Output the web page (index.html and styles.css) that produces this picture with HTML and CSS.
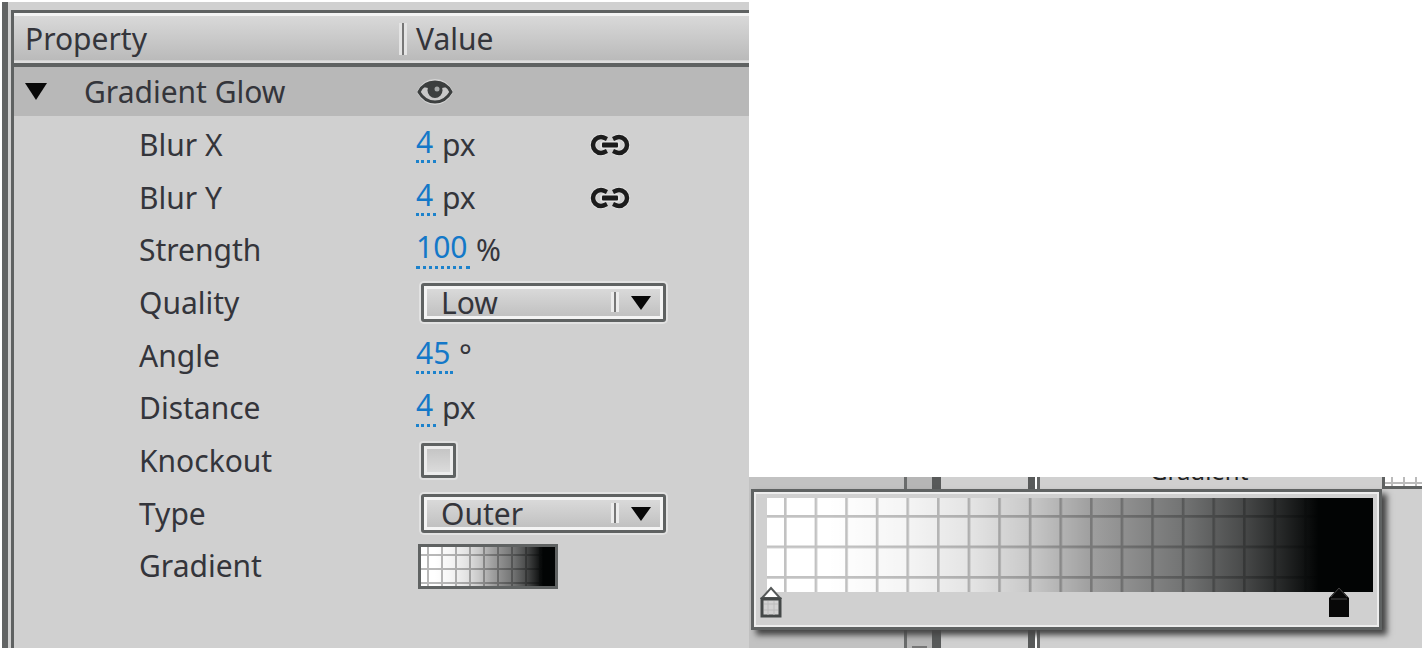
FILE: index.html
```html
<!DOCTYPE html>
<html lang="en">
<head>
  <meta charset="UTF-8" />
  <meta name="viewport" content="width=device-width, initial-scale=1" />
  <title>Gradient Glow</title>
  <link rel="stylesheet" href="styles.css">
</head>
<body>
  <svg width="0" height="0" class="defs" aria-hidden="true">
    <defs>
      <symbol id="link" viewBox="0 0 40 22">
        <path d="M17 5C15 4 13 3 11 3a8 8 0 0 0 0 16C13 19 15 18 17 17M23 5C25 4 27 3 29 3a8 8 0 0 1 0 16C27 19 25 18 23 17" fill="none" stroke="#e2e2e2" stroke-width="6"/>
        <path d="M17 5C15 4 13 3 11 3a8 8 0 0 0 0 16C13 19 15 18 17 17M23 5C25 4 27 3 29 3a8 8 0 0 1 0 16C27 19 25 18 23 17" fill="none" stroke="#1c1c1c" stroke-width="4.500"/>
        <rect x="10" y="7" width="20" height="8" rx="3" fill="#e2e2e2"/>
        <rect x="12" y="8.500" width="16" height="5" rx="1" fill="#1c1c1c"/>
      </symbol>
      <symbol id="arrow" viewBox="0 0 20 14">
        <path d="M0 0h20L10 14z" fill="#080808"/>
      </symbol>
      <linearGradient id="fade">
        <stop offset="0.100" stop-color="#000" stop-opacity="0"/>
        <stop offset="0.230" stop-color="#000" stop-opacity="0.040"/>
        <stop offset="0.340" stop-color="#000" stop-opacity="0.110"/>
        <stop offset="0.430" stop-color="#000" stop-opacity="0.210"/>
        <stop offset="0.530" stop-color="#000" stop-opacity="0.370"/>
        <stop offset="0.690" stop-color="#020404" stop-opacity="0.560"/>
        <stop offset="0.780" stop-color="#020404" stop-opacity="0.710"/>
        <stop offset="0.850" stop-color="#020404" stop-opacity="0.860"/>
        <stop offset="0.910" stop-color="#020404" stop-opacity="1"/>
      </linearGradient>
      <pattern id="grid" x="17" y="17" width="30.600" height="30.500" patternUnits="userSpaceOnUse">
        <path d="M0 1.300h31M1.300 0v31" stroke="#c2c2c2" stroke-width="2.600"/>
      </pattern>
      <pattern id="gridSmall" x="6" y="7" width="14" height="14" patternUnits="userSpaceOnUse">
        <path d="M0 1h14M1 0v14" stroke="#b8b8b8" stroke-width="2"/>
      </pattern>
    </defs>
  </svg>

  <main class="page">
    <section class="panel">
      <table class="props" aria-label="Filter properties">
        <thead>
          <tr>
            <th class="col-name">Property</th>
            <th class="col-value"><div class="heading">Value</div></th>
          </tr>
        </thead>
        <tbody class="filter">
          <tr>
            <td>
              <div class="filter-name">
                <button class="toggle" aria-label="Collapse"><svg width="22" height="17" viewBox="0 0 22 17"><path d="M0 0h22L11 17z" fill="#080808"/></svg></button>
                <span>Gradient Glow</span>
              </div>
            </td>
            <td>
              <button class="eye" aria-label="Visible">
                <svg width="36" height="28" viewBox="0 0 36 28">
                  <path d="M2 14C6 6 12 3 18 3s12 3 16 11c-4 7-10 11-16 11S6 21 2 14z" fill="#d8d8d8" stroke="#d4d4d4" stroke-width="4"/>
                  <path d="M2 14C6 6 12 4 18 4s12 2 16 10c-4 7-10 10-16 10S6 21 2 14z" fill="#c8c8c8" stroke="#3c3f3f" stroke-width="3"/>
                  <path d="M6 9C10 5 14 4 18 4s8 1 12 5l-5 1H11z" fill="#3c3f3f"/>
                  <circle cx="18" cy="12.500" r="7.500" fill="#3c3f3f"/>
                  <circle cx="20" cy="11" r="2.500" fill="#a4a7a7"/>
                </svg>
              </button>
            </td>
          </tr>
        </tbody>
        <tbody class="rows">
          <tr>
            <td><label for="blurX">Blur X</label></td>
            <td><div class="value linked"><span class="amount"><input id="blurX" class="num one" value="4"> px</span><button class="link" aria-label="Link X and Y"><svg width="40" height="22"><use href="#link"/></svg></button></div></td>
          </tr>
          <tr>
            <td><label for="blurY">Blur Y</label></td>
            <td><div class="value linked"><span class="amount"><input id="blurY" class="num one" value="4"> px</span><button class="link" aria-label="Link Y and X"><svg width="40" height="22"><use href="#link"/></svg></button></div></td>
          </tr>
          <tr>
            <td><label for="strength">Strength</label></td>
            <td><div class="value"><span class="amount"><input id="strength" class="num three" value="100"> %</span></div></td>
          </tr>
          <tr>
            <td><label for="quality">Quality</label></td>
            <td>
              <div class="select">
                <select id="quality"><option>Low</option><option>Medium</option><option>High</option></select>
                <svg class="arrow" width="20" height="14"><use href="#arrow"/></svg>
              </div>
            </td>
          </tr>
          <tr>
            <td><label for="angle">Angle</label></td>
            <td><div class="value"><span class="amount"><input id="angle" class="num two" value="45"> °</span></div></td>
          </tr>
          <tr>
            <td><label for="distance">Distance</label></td>
            <td><div class="value"><span class="amount"><input id="distance" class="num one" value="4"> px</span></div></td>
          </tr>
          <tr>
            <td><label for="knockout">Knockout</label></td>
            <td><input type="checkbox" id="knockout" class="check"></td>
          </tr>
          <tr>
            <td><label for="type">Type</label></td>
            <td>
              <div class="select">
                <select id="type"><option>Outer</option><option>Inner</option><option>Full</option></select>
                <svg class="arrow" width="20" height="14"><use href="#arrow"/></svg>
              </div>
            </td>
          </tr>
          <tr>
            <td><label for="gradient">Gradient</label></td>
            <td>
              <button id="gradient" class="swatch">
                <svg width="134" height="39" viewBox="0 0 134 39">
                  <rect width="134" height="39" fill="#fff"/>
                  <rect width="134" height="39" fill="url(#gridSmall)"/>
                  <rect width="134" height="39" fill="url(#fade)"/>
                </svg>
              </button>
            </td>
          </tr>
        </tbody>
      </table>
    </section>

    <section class="strip">
      <div class="pane side"></div>
      <div class="pane scroll"><span class="thumb"></span></div>
      <div class="pane list"></div>
      <div class="pane detail">
        <span class="cut-label">Gradient</span>
        <span class="cut-swatch"></span>
      </div>

      <div class="popup">
        <svg class="ramp" viewBox="0 0 606 94" preserveAspectRatio="none">
          <rect width="606" height="94" fill="#fff"/>
          <rect width="606" height="94" fill="url(#grid)"/>
          <rect width="606" height="94" fill="url(#fade)"/>
        </svg>
        <div class="stops">
          <button class="stop" aria-label="Start colour">
            <svg width="22" height="32" viewBox="0 0 22 32">
              <path d="M2 12L11 2l9 10z" fill="#fff" stroke="#555959" stroke-width="2"/>
              <rect x="2" y="13" width="18" height="17" fill="#d2d2d2" stroke="#444848" stroke-width="3"/>
              <path d="M4 18h14M4 24h14M8 15v14M14 15v14" stroke="#bcbcbc" stroke-width="1"/>
            </svg>
          </button>
          <button class="stop" aria-label="End colour">
            <svg width="22" height="32" viewBox="0 0 22 32">
              <path d="M1 12L11 1l10 11v19H1z" fill="#080808"/>
              <path d="M3 11l8-9 8 9M3 13h16" fill="none" stroke="#444" stroke-width="1"/>
            </svg>
          </button>
        </div>
      </div>
    </section>
  </main>
</body>
</html>
```
FILE: styles.css
```css
*, *::before, *::after {
  box-sizing: border-box;
}
body {
  margin: 0;
  background: #fff;
  color: #34353b;
  font-family: "Noto Sans", "Open Sans", sans-serif;
  font-size: 30px;
  line-height: 30px;
}
button, input, select {
  font: inherit;
  color: inherit;
  margin: 0;
  padding: 0;
  border: 0;
  background: none;
}
svg {
  display: block;
}
.defs {
  position: absolute;
}
.page {
  display: grid;
  grid-template-columns: 747fr 673fr;
  padding: 2px 3px 2px 2px;
}

/* property inspector */
.panel {
  border-left: 6px solid #626464;
  background: #d0d0d0;
  padding: 8px 0 0 3px;
}
.props {
  width: 100%;
  table-layout: fixed;
  border-collapse: separate;
  border-spacing: 0;
  border: solid #5f6262;
  border-width: 3px 0 0 3px;
}
.props::after {
  content: "";
  display: block;
  height: 56px;
}
th, td {
  padding: 0;
  text-align: left;
  font-weight: normal;
}
th {
  height: 54px;
  padding-bottom: 2px;
  border-top: 3px solid #f4f4f4;
  border-bottom: 4px solid #5f6262;
  background: linear-gradient(#d9d9d9, #bababa 94%, #dedede 95%);
}
.col-name {
  width: 385px;
  padding-left: 11px;
}
.heading {
  display: flex;
  align-items: center;
  gap: 9px;
}
.heading::before {
  content: "";
  width: 8px;
  height: 32px;
  border: solid #e4e4e4;
  border-width: 0 3px;
  background: #777;
}
.filter td {
  height: 49px;
  background: #b8b8b8;
}
.filter-name {
  display: flex;
  align-items: center;
}
.toggle {
  width: 59px;
  margin-left: 11px;
}
.eye {
  display: block;
  margin-left: 18px;
}
.rows tr {
  height: 53px;
}
.rows tr:nth-child(3n) {
  height: 52px;
}
.rows::before {
  content: "";
  display: block;
  height: 2px;
}
.rows label {
  margin-left: 125px;
}

/* values */
.value {
  display: flex;
  align-items: center;
  margin-left: 17px;
}
.amount {
  display: flex;
  align-items: center;
  gap: 6px;
}
.linked .amount {
  width: 174px;
}
.num {
  height: 37px;
  padding-bottom: 4px;
  border-bottom: 3px dotted #1c82cc;
  color: #1478c8;
}
.one {
  width: 20px;
}
.two {
  width: 37px;
}
.three {
  width: 54px;
}
.select {
  position: relative;
  width: 245px;
  margin-left: 22px;
}
.select select {
  appearance: none;
  display: block;
  width: 100%;
  height: 39px;
  padding-left: 17px;
  border: 3px solid #5f6262;
  border-radius: 3px;
  background: linear-gradient(#dcdcdc, #bebebe);
  box-shadow: inset 0 0 0 3px #f4f4f4, 0 0 0 2px #e2e2e2;
}
.select::after {
  content: "";
  position: absolute;
  top: 9px;
  right: 47px;
  width: 8px;
  height: 20px;
  border: solid #ececec;
  border-width: 0 3px;
  background: #777;
}
.arrow {
  position: absolute;
  top: 13px;
  right: 15px;
  pointer-events: none;
}
.check {
  appearance: none;
  display: block;
  width: 35px;
  height: 35px;
  margin-left: 22px;
  border: 3px solid #5f6262;
  border-radius: 2px;
  background: linear-gradient(#c2c2c2, #dedede);
  box-shadow: inset 0 0 0 3px #ececec, 0 0 0 2px #e0e0e0;
}
.swatch {
  display: block;
  margin-left: 19px;
  border: 3px solid #5f6262;
}

/* gradient editor over the panes behind it */
.strip {
  position: relative;
  align-self: end;
  display: flex;
  height: 171px;
  overflow: hidden;
}
.pane {
  background: #d0d0d0;
}
.side {
  width: 158px;
  background: #c2c2c2;
  border-right: 3px solid #6a6c6c;
}
.scroll {
  display: flex;
  align-items: flex-end;
  justify-content: center;
  width: 34px;
  background: #b6b6b6;
  border-right: 9px solid #585a5a;
}
.thumb {
  width: 15px;
  height: 2px;
  background: #777;
}
.list {
  width: 94px;
  border-right: 7px solid #585a5a;
}
.detail {
  display: flex;
  flex: 1;
  justify-content: space-between;
  align-items: flex-start;
  margin-left: 2px;
  border-left: 3px solid #626464;
}
.cut-label {
  margin: -21px 0 0 110px;
  font-size: 24px;
  line-height: 30px;
  color: #222;
}
.cut-swatch {
  width: 40px;
  height: 12px;
  border: solid #5f6262;
  border-width: 0 0 3px 3px;
  background: repeating-linear-gradient(90deg, transparent 0 6px, #bbb 6px 8px, transparent 8px 12px), linear-gradient(#fff 5px, #bbb 5px 7px, #fff 7px);
}
.popup {
  position: absolute;
  top: 12px;
  left: 2px;
  right: 40px;
  height: 141px;
  padding: 6px 6px 0 5px;
  border: 3px solid #5f6262;
  background: #d0d0d0;
  box-shadow: inset 0 0 0 2px #ededed, 5px 5px 6px #444;
}
.ramp {
  width: calc(100% - 8px);
  height: 94px;
  margin-left: 8px;
}
.stops {
  display: flex;
  justify-content: space-between;
  position: relative;
  margin: -6px 23px 0 1px;
}
```
